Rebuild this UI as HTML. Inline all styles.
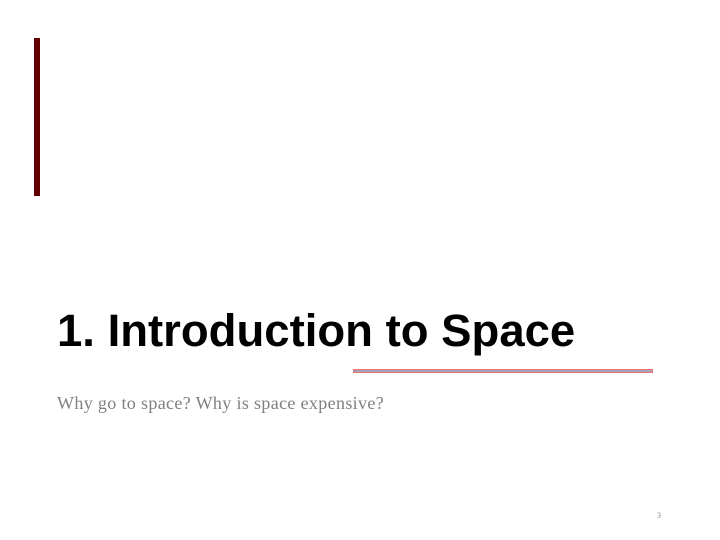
<!DOCTYPE html>
<html><head><style>
body{margin:0;width:720px;height:540px;background:#fff;position:relative;overflow:hidden}
.bar{position:absolute;left:34px;top:38px;width:6px;height:158px;background:#600000}
h1{position:absolute;left:57px;top:303px;margin:0;font:bold 45.5px/56px "Liberation Sans",sans-serif;color:#000;white-space:nowrap;letter-spacing:0px}
.line{position:absolute;left:353px;top:369px;width:298px;height:2px;background:#a4a4bc;border:1px solid #f07070}
.sub{position:absolute;left:57px;top:392px;font:18px/22px "Liberation Serif",serif;color:#808080;white-space:nowrap;letter-spacing:0.35px}
.num{position:absolute;left:657px;top:511px;font:8px "Liberation Serif",serif;color:#808080}
</style></head><body>
<div class="bar"></div>
<h1>1. Introduction to Space</h1>
<div class="line"></div>
<div class="sub">Why go to space? Why is space expensive?</div>
<div class="num">3</div>
</body></html>
